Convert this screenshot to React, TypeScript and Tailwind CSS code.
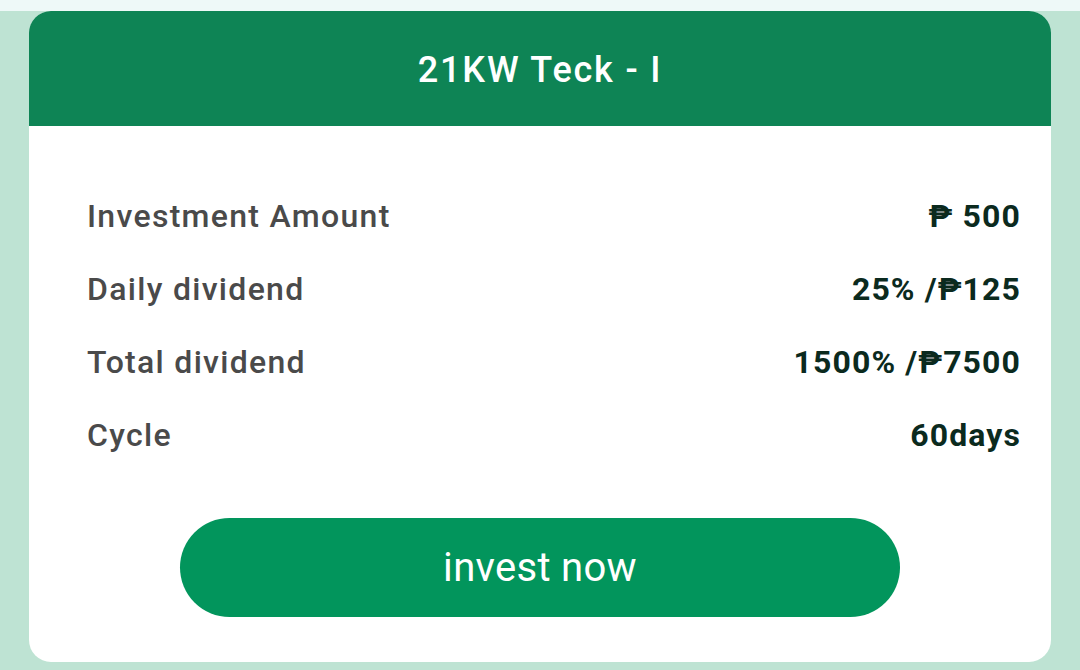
import React from 'react';

const rows = [
  { label: 'Investment Amount', value: '₱ 500' },
  { label: 'Daily dividend', value: '25% /₱125' },
  { label: 'Total dividend', value: '1500% /₱7500' },
  { label: 'Cycle', value: '60days' },
];

export default function App() {
  return (
    <div className="w-[1080px] h-[670px] overflow-hidden bg-[#bee3d3] font-['Roboto',sans-serif] flex flex-col">
      {/* top strip */}
      <div className="h-[11px] bg-[#eef9f8] shrink-0" />

      <div className="mx-[29px] w-[1022px] h-[651px] bg-white rounded-[22px] overflow-hidden flex flex-col">
        {/* Header */}
        <div className="h-[115px] bg-[#0e8455] flex items-center justify-center shrink-0 pt-[3px]">
          <h1 className="text-white text-[36px] font-medium tracking-[1.8px]">21KW Teck - I</h1>
        </div>

        {/* Rows */}
        <div className="pl-[58px] pr-[30px] pt-[71px] flex flex-col gap-[36px]">
          {rows.map((r) => (
            <div key={r.label} className="flex items-center justify-between h-[37px]">
              <span className="text-[32px] font-medium text-[#4a4a4a] tracking-[1.3px]">{r.label}</span>
              <span className="text-[32px] font-bold text-[#0b2a1e] tracking-[1.1px]">{r.value}</span>
            </div>
          ))}
        </div>

        {/* Button */}
        <div className="flex justify-center mt-[65px]">
          <button className="w-[720px] h-[99px] rounded-full bg-[#02955c] text-white text-[40px] font-normal tracking-[0.3px]">
            invest now
          </button>
        </div>
      </div>
    </div>
  );
}
